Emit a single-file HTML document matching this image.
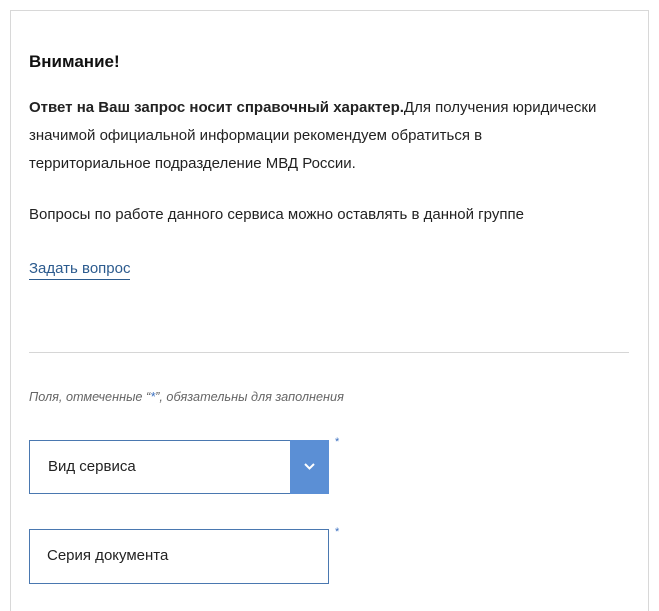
<!DOCTYPE html>
<html><head><meta charset="utf-8"><style>
body{margin:0;background:#fff;width:659px;height:596px;overflow:hidden;font-family:"Liberation Sans","DejaVu Sans",sans-serif;color:#222}
.box{position:absolute;left:10px;top:10px;width:637px;height:600px;border:1px solid #d8d8d8;border-bottom:none}
.t{position:absolute;left:29px;font-size:15px;white-space:nowrap}
</style></head><body>
<div class="box"></div>
<div class="t" style="top:52px;font-size:17px;font-weight:bold;color:#111">Внимание!</div>
<div class="t" style="top:94px;line-height:28px"><b>Ответ на Ваш запрос носит справочный характер.</b>Для получения юридически<br>значимой официальной информации рекомендуем обратиться в<br>территориальное подразделение МВД России.</div>
<div class="t" style="top:205px;line-height:20px">Вопросы по работе данного сервиса можно оставлять в данной группе</div>
<div class="t" style="top:259px;line-height:20px;color:#2c5b8e;border-bottom:1px solid #2c5b8e;padding-bottom:0px">Задать вопрос</div>
<div style="position:absolute;left:29px;top:352px;width:600px;height:1px;background:#d6d6d6"></div>
<div class="t" style="top:390px;font-size:12.7px;font-style:italic;color:#666">Поля, отмеченные “<span style="color:#3a6fc0">*</span>”, обязательны для заполнения</div>
<div style="position:absolute;left:29px;top:440px;width:298px;height:52px;border:1px solid #4a78b0"></div>
<div style="position:absolute;left:290px;top:440px;width:39px;height:54px;background:#5b8fd5"></div>
<svg style="position:absolute;left:303px;top:461px" width="13" height="10"><path d="M2 3l4.5 4.5L11 3" stroke="#fff" stroke-width="2" fill="none"/></svg>
<div class="t" style="top:458px;left:48px;color:#222">Вид сервиса</div>
<div style="position:absolute;left:29px;top:529px;width:298px;height:53px;border:1px solid #4a78b0"></div>
<div class="t" style="top:547px;left:47px;color:#222">Серия документа</div>
<div class="t" style="left:335px;top:436px;font-size:11px;color:#3a6fc0">*</div>
<div class="t" style="left:335px;top:526px;font-size:11px;color:#3a6fc0">*</div>
</body></html>
